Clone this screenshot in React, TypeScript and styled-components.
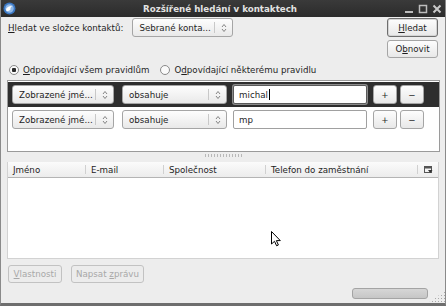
import React from "react";
import styled, { createGlobalStyle } from "styled-components";

const Global = createGlobalStyle`
  html, body { margin: 0; padding: 0; background: #ededed; }
  body { font-family: "DejaVu Sans", "Noto Sans", sans-serif; font-size: 8.7px; color: #1e1e1e; }
  * { box-sizing: border-box; }
`;

const Window = styled.div`
  position: relative;
  width: 446px;
  height: 306px;
  background: #ededed;
  border-left: 1px solid #8a8a8a;
  border-right: 1px solid #8a8a8a;
  border-bottom: 3px solid #6e6e6e;
  display: flex;
  flex-direction: column;
  overflow: hidden;
`;

const TitleBar = styled.div`
  height: 17px;
  margin: 0 -1px;
  background: linear-gradient(#3a3a3a, #2b2b2b);
  display: flex;
  align-items: center;
  padding: 0 4px 0 3px;
  color: #e2e2e2;
  font-weight: bold;
`;

const TitleText = styled.div`
  flex: 1;
  text-align: center;
  padding-left: 20px;
`;

const WinButtons = styled.div`
  display: flex;
  gap: 4px;
  align-items: center;
`;

const TopRow = styled.div`
  display: flex;
  justify-content: space-between;
  padding: 1px 7px 0 7px;
`;

const SearchLine = styled.div`
  display: flex;
  align-items: center;
  height: 19px;
  gap: 9px;
`;

const ButtonCol = styled.div`
  display: flex;
  flex-direction: column;
  gap: 3px;
`;

const PushButton = styled.button<{ $w: number; $h?: number; $default?: boolean; $disabled?: boolean }>`
  width: ${(p) => p.$w}px;
  height: ${(p) => p.$h ?? 18}px;
  padding: 0;
  font: inherit;
  color: ${(p) => (p.$disabled ? "#a8a8a8" : "#1e1e1e")};
  background: ${(p) => (p.$disabled ? "#ececec" : "linear-gradient(#fdfdfd, #e8e8e8)")};
  border: 1px solid ${(p) => (p.$disabled ? "#c2c2c2" : p.$default ? "#6e6e6e" : "#a5a5a5")};
  box-shadow: ${(p) => (p.$default ? "inset 0 0 0 1px #d4d4d4" : "none")};
  border-radius: 3px;
  display: flex;
  align-items: center;
  justify-content: center;
`;

const SelectBox = styled.div<{ $w: number }>`
  width: ${(p) => p.$w}px;
  height: 19px;
  background: linear-gradient(#fdfdfd, #e9e9e9);
  border: 1px solid #a5a5a5;
  border-radius: 3px;
  display: flex;
  align-items: center;
  padding-left: 6px;
`;

const SelectLabel = styled.span`
  flex: 1;
  white-space: nowrap;
  overflow: hidden;
`;

const SelectSep = styled.span`
  width: 1px;
  height: 11px;
  background: #c8c8c8;
`;

const SelectArrow = styled.span`
  width: 17px;
  display: flex;
  justify-content: center;
  align-items: center;
`;

const RadioRow = styled.div`
  display: flex;
  align-items: center;
  height: 14px;
  margin-top: 5px;
  padding-left: 8px;
`;

const RadioItem = styled.label`
  display: flex;
  align-items: center;
  gap: 4px;
  margin-right: 11px;
`;

const RadioCircle = styled.span<{ $on?: boolean }>`
  width: 10px;
  height: 10px;
  border-radius: 50%;
  border: 1px solid #8a8a8a;
  background: radial-gradient(circle, ${(p) => (p.$on ? "#2a2a2a 0 2px, #fafafa 2.5px" : "#fafafa 0, #fafafa 100%")});
`;

const RulesBox = styled.div`
  margin: 3px 5px 0 6px;
  height: 72px;
  background: #fff;
  border: 1px solid #9a9a9a;
  padding-top: 1px;
`;

const RuleRow = styled.div<{ $selected?: boolean }>`
  height: 25px;
  background: ${(p) => (p.$selected ? "#2e2e2e" : "transparent")};
  display: flex;
  align-items: center;
  padding-left: 4px;
  gap: 8px;
`;

const TextInput = styled.div<{ $focus?: boolean }>`
  width: 134px;
  height: 19px;
  margin-left: -2px;
  background: #fff;
  border: 1px solid ${(p) => (p.$focus ? "#5a5a5a" : "#a0a0a0")};
  box-shadow: ${(p) => (p.$focus ? "0 0 0 1px #8c8c8c" : "none")};
  border-radius: 2px;
  display: flex;
  align-items: center;
  padding-left: 5px;
`;

const Caret = styled.span`
  display: inline-block;
  width: 1px;
  height: 11px;
  background: #000;
  margin-left: 1px;
`;

const PlusMinus = styled.div`
  display: flex;
  gap: 3px;
  margin-left: -2px;
`;

const Splitter = styled.div`
  height: 10px;
  display: flex;
  align-items: flex-start;
  justify-content: center;
  padding-top: 2px;
`;

const Grip = styled.div`
  width: 38px;
  height: 3px;
  background-image: radial-gradient(circle, #b8b8b8 0.6px, transparent 0.8px);
  background-size: 3px 2px;
`;

const List = styled.div`
  margin: 0 6px 0 6px;
  height: 97px;
  background: #fff;
  border: 1px solid #d2d2d2;
  border-top: none;
  display: flex;
  flex-direction: column;
`;

const Header = styled.div`
  height: 16px;
  display: flex;
  background: linear-gradient(#fbfbfb, #ececec);
  border-bottom: 1px solid #b4b4b4;
`;

const Col = styled.div<{ $w: number }>`
  width: ${(p) => p.$w}px;
  display: flex;
  align-items: center;
  padding-left: 5px;
  position: relative;
  &::after {
    content: "";
    position: absolute;
    right: 0;
    top: 3px;
    bottom: 3px;
    width: 1px;
    background: #d0d0d0;
  }
`;

const ColPicker = styled.div`
  flex: 1;
  display: flex;
  align-items: center;
  justify-content: center;
`;

const BottomRow = styled.div`
  display: flex;
  gap: 9px;
  margin-top: 6px;
  padding-left: 7px;
`;

const StatusRow = styled.div`
  display: flex;
  justify-content: flex-end;
  align-items: flex-end;
  margin-top: 5px;
  height: 15px;
`;

const Progress = styled.div`
  width: 76px;
  height: 11px;
  border: 1px solid #a4a4a4;
  border-radius: 3px;
  background: linear-gradient(#d6d6d6, #c6c6c6);
  margin-bottom: 4px;
`;

const ResizeGrip = styled.div`
  width: 17px;
  height: 12px;
  background-image: radial-gradient(circle, #a8a8a8 0.7px, transparent 0.9px);
  background-size: 3px 3px;
  clip-path: polygon(100% 0, 100% 100%, 0 100%);
`;

const Cursor = styled.svg`
  position: absolute;
  left: 270px;
  top: 231px;
`;

const Arrows = () => (
  <svg width="6" height="10" viewBox="0 0 6 10">
    <path d="M1 4 L3 1.5 L5 4 M1 6 L3 8.5 L5 6" fill="none" stroke="#777" strokeWidth="0.9" />
  </svg>
);

const Select = ({ w, label }: { w: number; label: string }) => (
  <SelectBox $w={w}>
    <SelectLabel>{label}</SelectLabel>
    <SelectSep />
    <SelectArrow>
      <Arrows />
    </SelectArrow>
  </SelectBox>
);

const AppIcon = () => (
  <svg width="13" height="13" viewBox="0 0 13 13">
    <circle cx="6.5" cy="6.5" r="6" fill="#3b78c4" />
    <circle cx="6.5" cy="6.5" r="4.2" fill="#8fb7e6" />
    <path d="M3 7 Q5 3.5 9.5 4 Q7 5 7.5 7.5 Q6 9.5 3.5 9 Z" fill="#fff" />
  </svg>
);

const Rule = ({ selected, value, focus }: { selected?: boolean; value: string; focus?: boolean }) => (
  <RuleRow $selected={selected}>
    <Select w={102} label="Zobrazené jmé..." />
    <Select w={105} label="obsahuje" />
    <TextInput $focus={focus}>
      {value}
      {focus && <Caret />}
    </TextInput>
    <PlusMinus>
      <PushButton $w={24} $h={19}>+</PushButton>
      <PushButton $w={24} $h={19}>−</PushButton>
    </PlusMinus>
  </RuleRow>
);

export default function App() {
  return (
    <>
      <Global />
      <Window>
        <TitleBar>
          <AppIcon />
          <TitleText>Rozšířené hledání v kontaktech</TitleText>
          <WinButtons>
            <svg width="10" height="10" viewBox="0 0 10 10">
              <rect x="1" y="7" width="8" height="2" fill="#bdbdbd" />
            </svg>
            <svg width="10" height="10" viewBox="0 0 10 10">
              <rect x="1.5" y="1.5" width="7" height="7" fill="none" stroke="#bdbdbd" strokeWidth="1.5" />
            </svg>
            <svg width="10" height="10" viewBox="0 0 10 10">
              <path d="M1.5 1.5 L8.5 8.5 M8.5 1.5 L1.5 8.5" stroke="#c8c8c8" strokeWidth="2" />
            </svg>
          </WinButtons>
        </TitleBar>

        <TopRow>
          <SearchLine>
            <span>
              <u>H</u>ledat ve složce kontaktů:
            </span>
            <Select w={101} label="Sebrané konta..." />
          </SearchLine>
          <ButtonCol>
            <PushButton $w={51} $h={19} $default>
              <span>
                <u>H</u>ledat
              </span>
            </PushButton>
            <PushButton $w={51} $h={18}>
              <span>
                O<u>b</u>novit
              </span>
            </PushButton>
          </ButtonCol>
        </TopRow>

        <RadioRow>
          <RadioItem>
            <RadioCircle $on />
            <span>
              <u>O</u>dpovídající všem pravidlům
            </span>
          </RadioItem>
          <RadioItem>
            <RadioCircle />
            <span>
              O<u>d</u>povídající některému pravidlu
            </span>
          </RadioItem>
        </RadioRow>

        <RulesBox>
          <Rule selected value="michal" focus />
          <Rule value="mp" />
        </RulesBox>

        <Splitter>
          <Grip />
        </Splitter>

        <List>
          <Header>
            <Col $w={78}>Jméno</Col>
            <Col $w={78}>E-mail</Col>
            <Col $w={102}>Společnost</Col>
            <Col $w={152}>Telefon do zaměstnání</Col>
            <ColPicker>
              <svg width="9" height="8" viewBox="0 0 9 8">
                <rect x="0.5" y="0.5" width="7" height="6" fill="none" stroke="#555" />
                <rect x="0.5" y="0.5" width="7" height="2" fill="#555" />
                <path d="M4 4 L8.5 4 L6.25 7 Z" fill="#333" />
              </svg>
            </ColPicker>
          </Header>
        </List>

        <BottomRow>
          <PushButton $w={54} $disabled>
            <span>
              <u>V</u>lastnosti
            </span>
          </PushButton>
          <PushButton $w={73} $disabled>
            <span>
              Napsat <u>z</u>právu
            </span>
          </PushButton>
        </BottomRow>

        <StatusRow>
          <Progress />
          <ResizeGrip />
        </StatusRow>

        <Cursor width="11" height="16" viewBox="0 0 11 16">
          <path d="M0.5 0.5 L0.5 13 L3.5 10.3 L5.6 14.8 L7.4 14 L5.4 9.6 L9.3 9.6 Z" fill="#fff" stroke="#000" strokeWidth="1" strokeLinejoin="round" />
        </Cursor>
      </Window>
    </>
  );
}
